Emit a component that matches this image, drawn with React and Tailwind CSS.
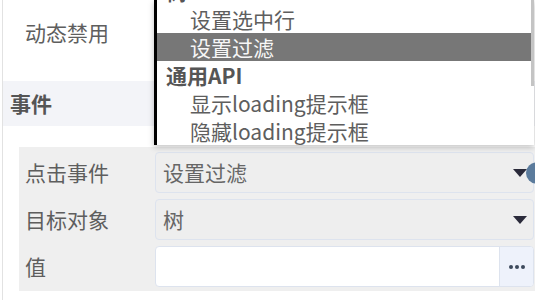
import React from "react";

const font = "font-['Noto_Sans_CJK_SC','Noto_Sans',sans-serif]";

function Caret() {
  return (
    <svg width="14" height="8" viewBox="0 0 14 8" className="shrink-0">
      <path d="M0 0 H14 L7 8 Z" fill="#2a2a3a" />
    </svg>
  );
}

function SelectBox({ value, knob }) {
  return (
    <div className="relative flex h-[41px] w-[379px] items-center justify-between rounded-[4px] border border-[#dde3ee] bg-[#eeeeee] pl-[7px] pr-[6px]">
      <span className="text-[21px] text-[#666]">{value}</span>
      <Caret />
      {knob && (
        <div className="absolute right-[-14px] top-1/2 h-[21px] w-[21px] -translate-y-1/2 rounded-full bg-[#5b7b9c]" />
      )}
    </div>
  );
}

function FieldRow({ label, children }) {
  return (
    <div className="flex items-center">
      <div className="w-[136px] pl-[6px] text-[21px] text-[#5e5e5e]">{label}</div>
      {children}
    </div>
  );
}

const menu = [
  { text: "树", group: true },
  { text: "设置选中行" },
  { text: "设置过滤", active: true },
  { text: "通用API", group: true },
  { text: "显示loading提示框" },
  { text: "隐藏loading提示框" },
];

export default function App() {
  return (
    <div className={`relative h-[300px] w-[535px] overflow-hidden bg-white ${font}`}>
      <div className="ml-[2px] h-full border-l border-[#e2e2e2]">
        {/* 动态禁用 */}
        <div className="h-[81px] pl-[22px] pt-[18px] text-[21px] leading-[28px] text-[#5e5e5e]">
          动态禁用
        </div>

        {/* 事件 header */}
        <div className="flex h-[45px] items-center bg-[#f3f4f8] pl-[7px] text-[21px] font-bold text-[#555]">
          事件
        </div>

        <div className="h-[21px]" />

        {/* event panel */}
        <div className="ml-[16px] flex flex-col gap-[6px] bg-[#efefef] pb-[4px] pt-[5px]">
          <FieldRow label="点击事件">
            <SelectBox value="设置过滤" knob />
          </FieldRow>
          <FieldRow label="目标对象">
            <SelectBox value="树" />
          </FieldRow>
          <FieldRow label="值">
            <div className="flex h-[41px] w-[379px] overflow-hidden rounded-[4px] border border-[#dde3ee] bg-white">
              <div className="flex-1" />
              <div className="flex w-[34px] items-center justify-center gap-[2px] border-l border-[#dde3ee] bg-[#eef2fb]">
                <span className="h-[4px] w-[4px] rounded-full bg-[#3d4a5c]" />
                <span className="h-[4px] w-[4px] rounded-full bg-[#3d4a5c]" />
                <span className="h-[4px] w-[4px] rounded-full bg-[#3d4a5c]" />
              </div>
            </div>
          </FieldRow>
        </div>
      </div>

      {/* open dropdown menu */}
      <div className="absolute left-[154px] top-0 h-[145px] w-[380px] overflow-hidden border-l-[3px] border-black bg-white shadow-[0_2px_6px_rgba(0,0,0,0.25)]">
        <div className="-mt-[23px] pr-[3px]">
          {menu.map((m) => (
            <div
              key={m.text}
              className={
                "h-[28px] whitespace-nowrap text-[21px] leading-[28px] " +
                (m.group
                  ? "pl-[9px] font-bold text-[#555]"
                  : m.active
                  ? "bg-[#777777] pl-[33px] text-[#f7f7f7]"
                  : "pl-[33px] text-[#5e5e5e]")
              }
            >
              {m.text}
            </div>
          ))}
        </div>
        <div className="absolute right-0 top-0 h-[86px] w-[3px] bg-[#c4c4c4]" />
      </div>
    </div>
  );
}
